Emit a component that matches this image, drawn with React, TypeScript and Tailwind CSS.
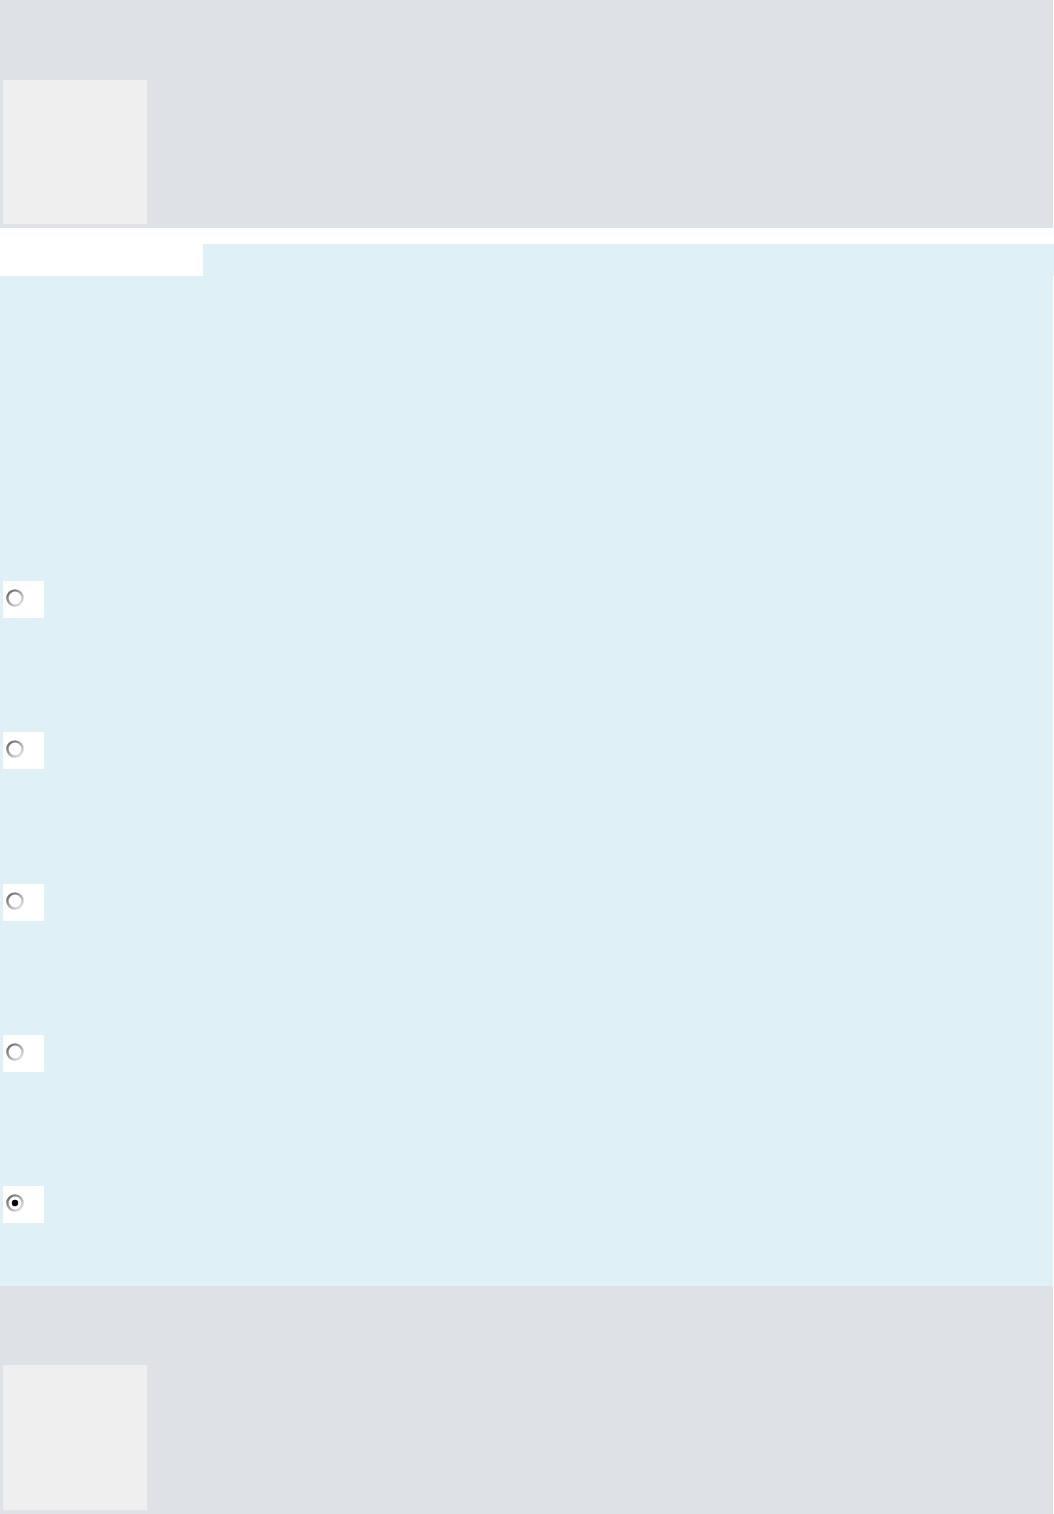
import React from "react";

const options = [false, false, false, false, true];

function Radio({ checked }: { checked: boolean }) {
    return (
        <div className="w-[41px] h-[37px] bg-white relative">
            <svg className="absolute left-[3px] top-[8px]" width="18" height="18" viewBox="0 0 18 18">
                <defs>
                    <linearGradient id="ring" x1="0" y1="0" x2="1" y2="1">
                        <stop offset="0" stopColor="#5f5f5f" />
                        <stop offset="0.5" stopColor="#a8a8a8" />
                        <stop offset="1" stopColor="#ececec" />
                    </linearGradient>
                </defs>
                <circle cx="9" cy="9" r="7.6" fill="#fdfdfd" stroke="url(#ring)" strokeWidth="2.4" />
                {checked && <circle cx="9" cy="9" r="3.2" fill="#0a0a0a" />}
            </svg>
        </div>
    );
}

export default function App() {
    return (
        <div className="w-[1054px] min-h-[1514px] bg-white">
            <div className="w-[1053px] h-[228px] bg-[#dee1e6] pt-[80px] pl-[3px]">
                <div className="w-[144px] h-[144px] bg-[#efefef]" />
            </div>
            <div className="h-[16px]" />
            <div className="flex h-[32px]">
                <div className="w-[203px] bg-white" />
                <div className="flex-1 bg-[#dff0f6]" />
            </div>
            <div className="w-[1053px] h-[1010px] bg-[#dff0f6] pt-[305px] pl-[3px] flex flex-col gap-[114.25px]">
                {options.map((c, i) => (
                    <Radio key={i} checked={c} />
                ))}
            </div>
            <div className="w-[1053px] h-[228px] bg-[#dee1e6] pt-[79px] pl-[3px]">
                <div className="w-[144px] h-[145px] bg-[#efefef]" />
            </div>
        </div>
    );
}
